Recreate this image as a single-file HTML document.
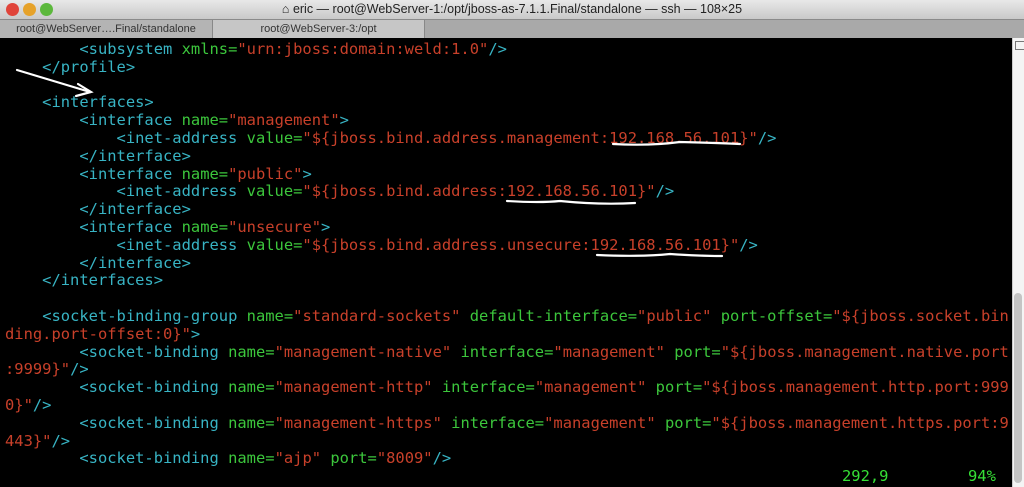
<!DOCTYPE html>
<html><head><meta charset="utf-8"><style>
*{margin:0;padding:0}
body{width:1024px;height:487px;overflow:hidden;background:#000;position:relative;font-family:"Liberation Sans",sans-serif}
#title{position:absolute;left:0;top:0;width:1024px;height:19px;background:linear-gradient(#e8e8e8,#c9c9c9);font-size:12.5px;color:#222;text-align:center;line-height:19px}
#tabs{position:absolute;left:0;top:19px;width:1024px;height:18px;background:#a9a9a9;border-top:1px solid #8a8a8a;border-bottom:1px solid #777}
.tab{position:absolute;top:0;height:18px;font-size:11px;line-height:18px;text-align:center;color:#333}
.dot{position:absolute;top:3px;width:13px;height:13px;border-radius:50%}
#term{position:absolute;left:0;top:38px;width:1012px;height:449px;background:#000}
.l{position:absolute;left:5px;font-family:"DejaVu Sans Mono","Liberation Mono",monospace;font-size:15.45px;white-space:pre;line-height:18px;letter-spacing:0;margin-top:1px}
.c{color:#38b4c4}.g{color:#3cc63c}.r{color:#c8402a}.gs{color:#36e036}
#sb{position:absolute;left:1012px;top:38px;width:12px;height:449px;background:#f4f4f4;border-left:1px solid #ccc}
</style></head><body>
<div id="title">⌂ eric — root@WebServer-1:/opt/jboss-as-7.1.1.Final/standalone — ssh — 108×25</div>
<div class="dot" style="left:6px;background:#e0443a"></div>
<div class="dot" style="left:23px;background:#e6a22a"></div>
<div class="dot" style="left:40px;background:#5cb83c"></div>
<div id="tabs">
<div class="tab" style="left:0;width:212px;background:#b4b4b4;border-right:1px solid #888">root@WebServer….Final/standalone</div>
<div class="tab" style="left:213px;width:211px;background:#c6c6c6;border-right:1px solid #888">root@WebServer-3:/opt</div>
</div>
<div id="term"></div>
<div id="sb"><div style="position:absolute;left:2px;top:3px;width:8px;height:7px;border:1px solid #777"></div><div style="position:absolute;left:1px;top:255px;width:8px;height:190px;background:#c4c4c4;border-radius:4px"></div></div>

<div class="l" style="top:39px">        <span class="c">&lt;subsystem</span> <span class="g">xmlns=</span><span class="r">"urn:jboss:domain:weld:1.0"</span><span class="c">/&gt;</span></div>
<div class="l c" style="top:57px">    &lt;/profile&gt;</div>
<div class="l c" style="top:92px">    &lt;interfaces&gt;</div>
<div class="l" style="top:110px">        <span class="c">&lt;interface</span> <span class="g">name=</span><span class="r">"management"</span><span class="c">&gt;</span></div>
<div class="l" style="top:128px">            <span class="c">&lt;inet-address</span> <span class="g">value=</span><span class="r">"${jboss.bind.address.management:192.168.56.101}"</span><span class="c">/&gt;</span></div>
<div class="l c" style="top:146px">        &lt;/interface&gt;</div>
<div class="l" style="top:164px">        <span class="c">&lt;interface</span> <span class="g">name=</span><span class="r">"public"</span><span class="c">&gt;</span></div>
<div class="l" style="top:181px">            <span class="c">&lt;inet-address</span> <span class="g">value=</span><span class="r">"${jboss.bind.address:192.168.56.101}"</span><span class="c">/&gt;</span></div>
<div class="l c" style="top:199px">        &lt;/interface&gt;</div>
<div class="l" style="top:217px">        <span class="c">&lt;interface</span> <span class="g">name=</span><span class="r">"unsecure"</span><span class="c">&gt;</span></div>
<div class="l" style="top:235px">            <span class="c">&lt;inet-address</span> <span class="g">value=</span><span class="r">"${jboss.bind.address.unsecure:192.168.56.101}"</span><span class="c">/&gt;</span></div>
<div class="l c" style="top:253px">        &lt;/interface&gt;</div>
<div class="l c" style="top:270px">    &lt;/interfaces&gt;</div>
<div class="l" style="top:306px">    <span class="c">&lt;socket-binding-group</span> <span class="g">name=</span><span class="r">"standard-sockets"</span> <span class="g">default-interface=</span><span class="r">"public"</span> <span class="g">port-offset=</span><span class="r">"${jboss.socket.bin</span></div>
<div class="l" style="top:324px"><span class="r">ding.port-offset:0}"</span><span class="c">&gt;</span></div>
<div class="l" style="top:342px">        <span class="c">&lt;socket-binding</span> <span class="g">name=</span><span class="r">"management-native"</span> <span class="g">interface=</span><span class="r">"management"</span> <span class="g">port=</span><span class="r">"${jboss.management.native.port</span></div>
<div class="l" style="top:359px"><span class="r">:9999}"</span><span class="c">/&gt;</span></div>
<div class="l" style="top:377px">        <span class="c">&lt;socket-binding</span> <span class="g">name=</span><span class="r">"management-http"</span> <span class="g">interface=</span><span class="r">"management"</span> <span class="g">port=</span><span class="r">"${jboss.management.http.port:999</span></div>
<div class="l" style="top:395px"><span class="r">0}"</span><span class="c">/&gt;</span></div>
<div class="l" style="top:413px">        <span class="c">&lt;socket-binding</span> <span class="g">name=</span><span class="r">"management-https"</span> <span class="g">interface=</span><span class="r">"management"</span> <span class="g">port=</span><span class="r">"${jboss.management.https.port:9</span></div>
<div class="l" style="top:431px"><span class="r">443}"</span><span class="c">/&gt;</span></div>
<div class="l" style="top:448px">        <span class="c">&lt;socket-binding</span> <span class="g">name=</span><span class="r">"ajp"</span> <span class="g">port=</span><span class="r">"8009"</span><span class="c">/&gt;</span></div>
<div class="l gs" style="top:466px;left:842px">292,9</div>
<div class="l gs" style="top:466px;left:968px">94%</div>

<svg width="1024" height="487" style="position:absolute;left:0;top:0" fill="none" stroke="#fff" stroke-width="2.2" stroke-linecap="round">
<path d="M17 70 L90 92"/><path d="M78 84 L91 92 L76 96"/>
<path d="M613 144 Q650 146 680 142 Q720 143 740 144"/>
<path d="M507 201 Q540 203 560 201 Q600 205 635 203"/>
<path d="M597 255 Q640 257 670 254 Q700 256 722 256"/>
</svg>
</body></html>
